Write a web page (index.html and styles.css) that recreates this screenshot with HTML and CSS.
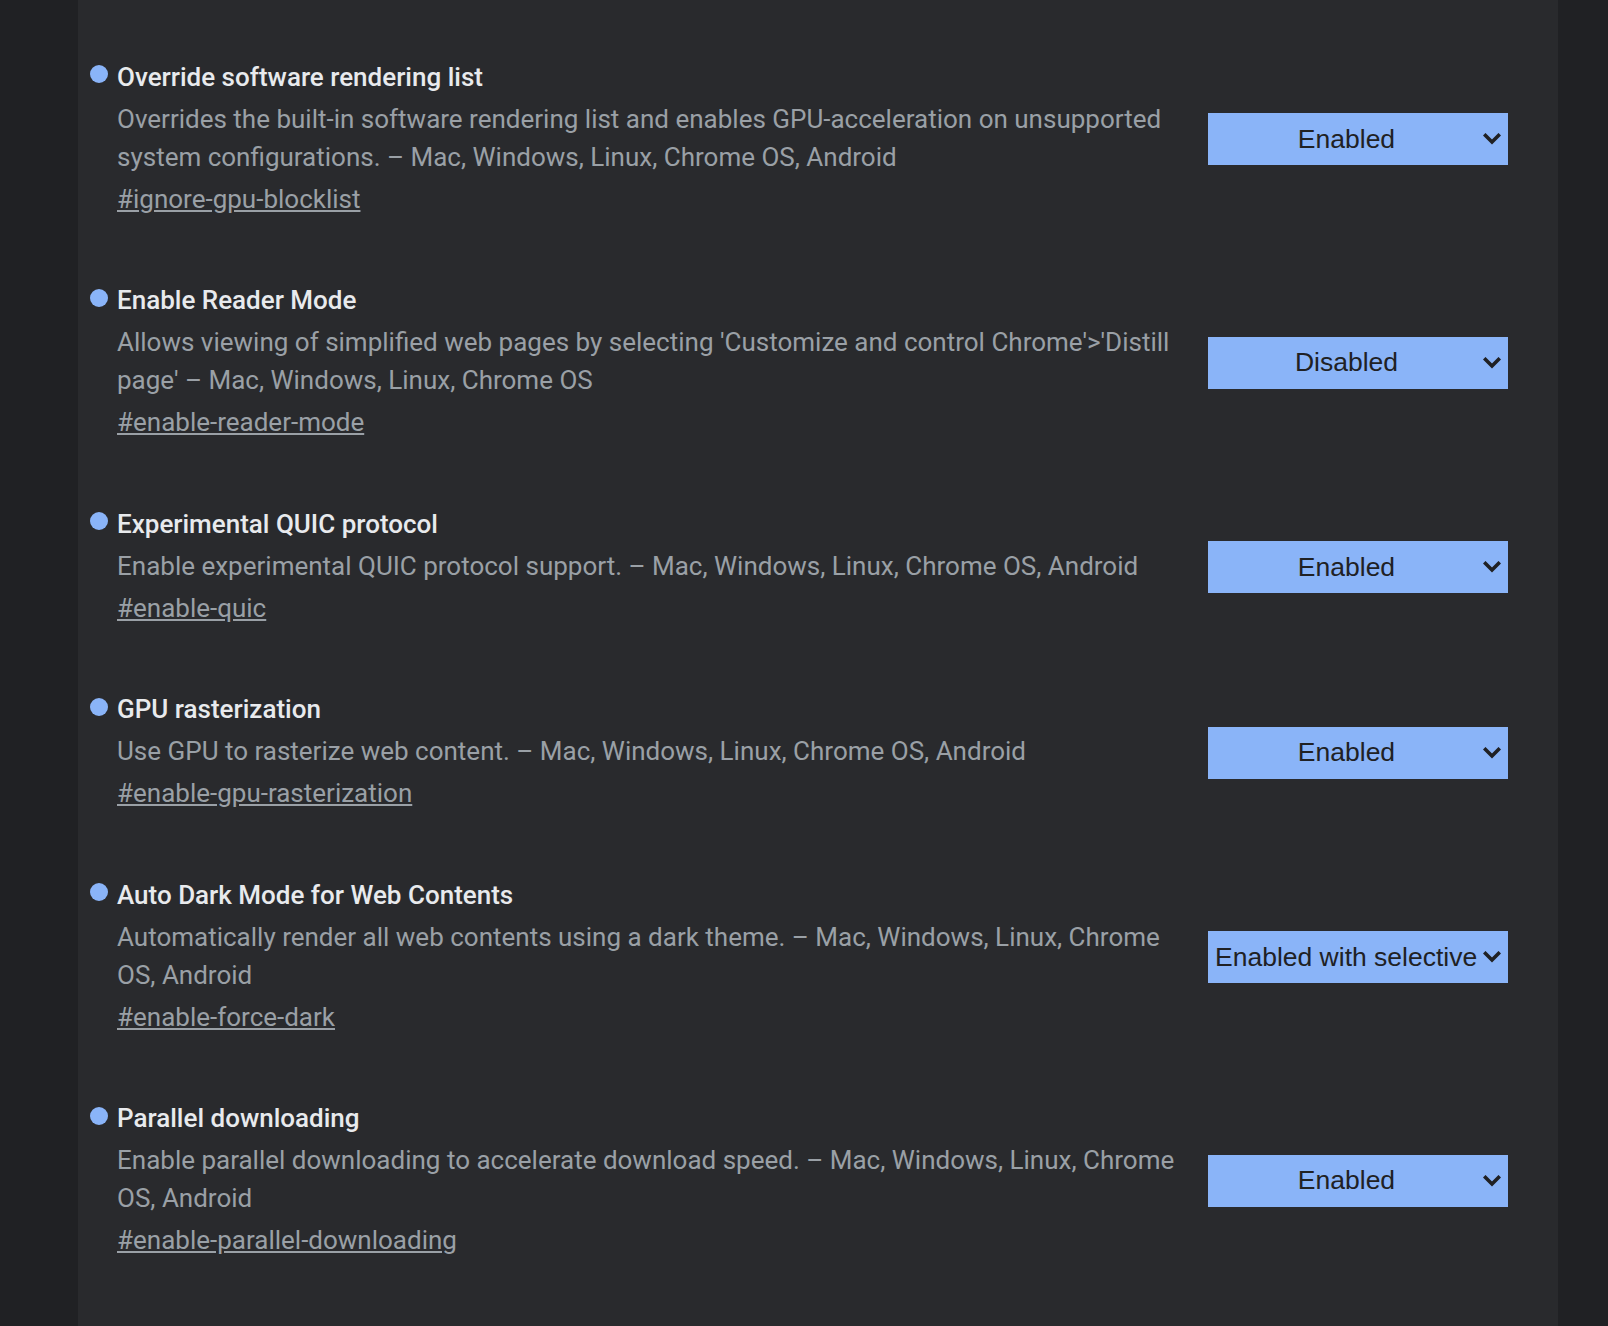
FILE: index.html
```html
<!DOCTYPE html>
<html lang="en">
<head>
<meta charset="utf-8">
<title>Experiments</title>
<link rel="stylesheet" href="styles.css">
</head>
<body>
<main class="panel">
  <section class="item">
    <span class="dot"></span>
    <div class="info">
      <h2 class="name">Override software rendering list</h2>
      <p class="desc">Overrides the built-in software rendering list and enables GPU-acceleration on unsupported system configurations. – Mac, Windows, Linux, Chrome OS, Android</p>
      <a class="link" href="#ignore-gpu-blocklist">#ignore-gpu-blocklist</a>
    </div>
    <div class="select"><span class="value">Enabled</span><svg class="chev" width="18" height="12" viewBox="0 0 18 12"><polyline points="2.5,2.5 9,9 15.5,2.5"/></svg></div>
  </section>
  <section class="item">
    <span class="dot"></span>
    <div class="info">
      <h2 class="name">Enable Reader Mode</h2>
      <p class="desc">Allows viewing of simplified web pages by selecting 'Customize and control Chrome'&gt;'Distill page' – Mac, Windows, Linux, Chrome OS</p>
      <a class="link" href="#enable-reader-mode">#enable-reader-mode</a>
    </div>
    <div class="select"><span class="value">Disabled</span><svg class="chev" width="18" height="12" viewBox="0 0 18 12"><polyline points="2.5,2.5 9,9 15.5,2.5"/></svg></div>
  </section>
  <section class="item">
    <span class="dot"></span>
    <div class="info">
      <h2 class="name">Experimental QUIC protocol</h2>
      <p class="desc">Enable experimental QUIC protocol support. – Mac, Windows, Linux, Chrome OS, Android</p>
      <a class="link" href="#enable-quic">#enable-quic</a>
    </div>
    <div class="select"><span class="value">Enabled</span><svg class="chev" width="18" height="12" viewBox="0 0 18 12"><polyline points="2.5,2.5 9,9 15.5,2.5"/></svg></div>
  </section>
  <section class="item">
    <span class="dot"></span>
    <div class="info">
      <h2 class="name">GPU rasterization</h2>
      <p class="desc">Use GPU to rasterize web content. – Mac, Windows, Linux, Chrome OS, Android</p>
      <a class="link" href="#enable-gpu-rasterization">#enable-gpu-rasterization</a>
    </div>
    <div class="select"><span class="value">Enabled</span><svg class="chev" width="18" height="12" viewBox="0 0 18 12"><polyline points="2.5,2.5 9,9 15.5,2.5"/></svg></div>
  </section>
  <section class="item">
    <span class="dot"></span>
    <div class="info">
      <h2 class="name">Auto Dark Mode for Web Contents</h2>
      <p class="desc">Automatically render all web contents using a dark theme. – Mac, Windows, Linux, Chrome OS, Android</p>
      <a class="link" href="#enable-force-dark">#enable-force-dark</a>
    </div>
    <div class="select"><span class="value">Enabled with selective image inversion</span><svg class="chev" width="18" height="12" viewBox="0 0 18 12"><polyline points="2.5,2.5 9,9 15.5,2.5"/></svg></div>
  </section>
  <section class="item">
    <span class="dot"></span>
    <div class="info">
      <h2 class="name">Parallel downloading</h2>
      <p class="desc">Enable parallel downloading to accelerate download speed. – Mac, Windows, Linux, Chrome OS, Android</p>
      <a class="link" href="#enable-parallel-downloading">#enable-parallel-downloading</a>
    </div>
    <div class="select"><span class="value">Enabled</span><svg class="chev" width="18" height="12" viewBox="0 0 18 12"><polyline points="2.5,2.5 9,9 15.5,2.5"/></svg></div>
  </section>
</main>
</body>
</html>
```
FILE: styles.css
```css
html, body {
  margin: 0;
  padding: 0;
  background: #202124;
}
body {
  font-family: Roboto, "Noto Sans", sans-serif;
}
.panel {
  margin-left: 78px;
  width: 1480px;
  box-sizing: border-box;
  min-height: 1326px;
  background: #292a2d;
  padding: 60.5px 50px 40px 12px;
  display: flex;
  flex-direction: column;
  gap: 66.6px;
}
.item {
  display: flex;
  align-items: center;
}
.dot {
  flex: none;
  align-self: flex-start;
  width: 18px;
  height: 18px;
  margin-top: 4.5px;
  margin-right: 9px;
  border-radius: 50%;
  background: #8ab4f8;
}
.info {
  flex: 1;
  min-width: 0;
  margin-right: 21px;
}
.name {
  margin: 0;
  font-size: 26px;
  line-height: 32px;
  font-weight: 500;
  color: #e8eaed;
}
.desc {
  margin: 7px 0 0;
  font-size: 26px;
  line-height: 38px;
  color: #9aa0a6;
}
.link {
  display: block;
  margin-top: 4px;
  font-size: 26px;
  line-height: 38px;
  color: #9aa0a6;
  text-decoration: underline;
  width: max-content;
}
.select {
  flex: none;
  width: 300px;
  height: 52px;
  box-sizing: border-box;
  padding: 0 7px;
  background: #8ab4f8;
  display: flex;
  align-items: center;
  font-family: "Liberation Sans", Arial, sans-serif;
  font-size: 26.5px;
  color: #202124;
}
.value {
  flex: 1;
  min-width: 0;
  overflow: hidden;
  white-space: nowrap;
  text-align: center;
}
.chev {
  flex: none;
  margin-left: 5px;
  fill: none;
  stroke: #202124;
  stroke-width: 3.6;
  stroke-linecap: square;
}
```
